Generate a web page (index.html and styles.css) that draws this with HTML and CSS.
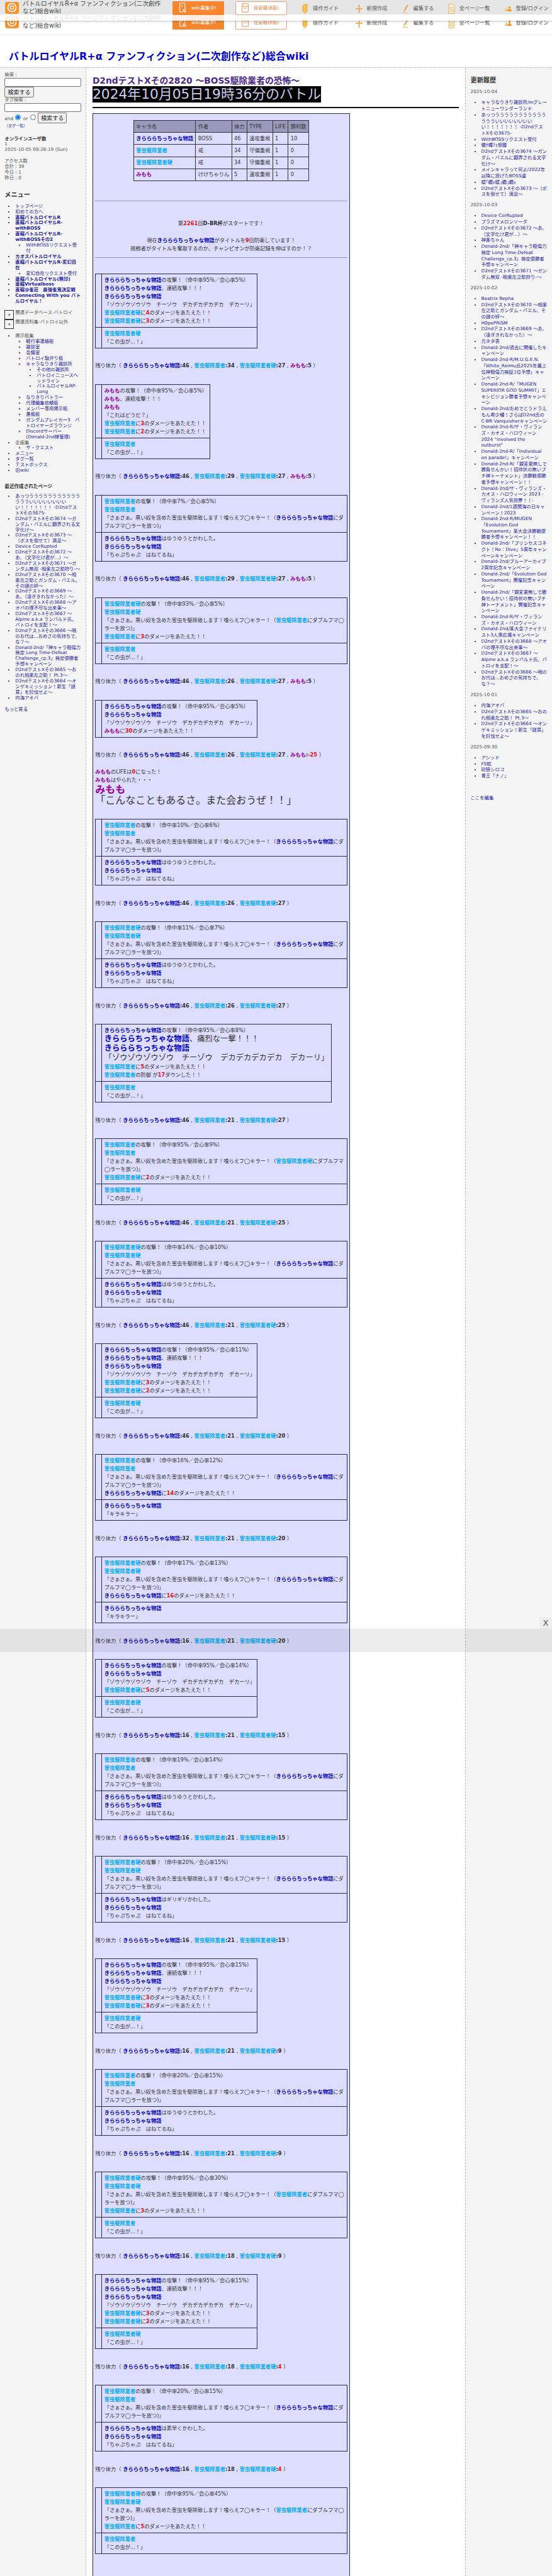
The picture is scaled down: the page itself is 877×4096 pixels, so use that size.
FILE: index.html
```html
<!DOCTYPE html>
<html lang="ja">
<head>
  <meta charset="UTF-8">
  <title>D2ndテストXその2820 ～BOSS駆除業者の恐怖～</title>
  <link rel="stylesheet" href="styles.css">
</head>
<body>
<svg class="defs" width="0" height="0">
  <symbol id="i-logo" viewBox="0 0 22 19"><path d="M3 0h16a3 3 0 0 1 3 3v12a4 4 0 0 1-4 4H4a4 4 0 0 1-4-4V3a3 3 0 0 1 3-3z" fill="#f7922f"/><circle cx="11" cy="9" r="6.5" fill="none" stroke="#fff" stroke-width="1.6"/><circle cx="11" cy="9" r="2.6" fill="none" stroke="#fff" stroke-width="1.4"/></symbol>
  <symbol id="i-doc" viewBox="0 0 16 24"><path d="M1 1h12v15H9v5H1z" fill="none" stroke="#fff" stroke-width="1.6"/><path d="M6 5v5M10 20h6M13 17v6" stroke="#fff" stroke-width="1.6"/></symbol>
  <symbol id="i-box" viewBox="0 0 18 24"><rect x="1" y="1" width="16" height="22" rx="2" fill="none" stroke="#ee8a45" stroke-width="1.6"/><path d="M1 8h16M6 13h6" stroke="#ee8a45" stroke-width="1.6"/></symbol>
  <symbol id="i-guide" viewBox="0 0 12 22"><path d="M1 4l5-3 5 0v13c0 3-3 5-5 7-2-2-5-4-5-7z" fill="#f4c15a" stroke="#ee9a3a" stroke-width="1"/></symbol>
  <symbol id="i-new" viewBox="0 0 16 22"><path d="M8 1v20M0 11h16" stroke="#f0a040" stroke-width="2.4"/></symbol>
  <symbol id="i-edit" viewBox="0 0 16 22"><path d="M12 1L14 3L6 16L3 16z" fill="#ee9a3a"/><path d="M1 20h11" stroke="#f4c15a" stroke-width="2"/></symbol>
  <symbol id="i-list" viewBox="0 0 14 22"><path d="M1 1h8l4 4v16H1z" fill="#fff5dd" stroke="#f0a040" stroke-width="1.2"/><path d="M3.5 9h7M3.5 12.5h7M3.5 16h7" stroke="#f0a040"/></symbol>
  <symbol id="i-user" viewBox="0 0 22 16"><circle cx="15" cy="3.5" r="3.5" fill="#f0952f"/><path d="M8 16c0-5 3-8 7-8s7 3 7 8z" fill="#f0952f"/><circle cx="5" cy="7" r="2.5" fill="#f4c15a"/><path d="M0 16c0-3 2-6 5-6s4 3 4 6z" fill="#f4c15a"/></symbol>
</svg>

<div class="page">
  <header class="topbar">
    <div class="navrow">
      <div class="brand"><svg class="logo"><use href="#i-logo"/></svg><span>バトルロイヤルR+α ファンフィクション(二次創作など)総合wiki</span></div>
      <a class="btn btn-orange"><svg class="btn-ico"><use href="#i-doc"/></svg>wiki募集中!</a>
      <a class="btn btn-line"><svg class="btn-ico"><use href="#i-box"/></svg>目安箱(β版)</a>
      <a class="navitem"><svg class="nav-ico"><use href="#i-guide"/></svg>操作ガイド</a>
      <a class="navitem"><svg class="nav-ico"><use href="#i-new"/></svg>新規作成</a>
      <a class="navitem"><svg class="nav-ico"><use href="#i-edit"/></svg>編集する</a>
      <a class="navitem"><svg class="nav-ico"><use href="#i-list"/></svg>全ページ一覧</a>
      <a class="navitem"><svg class="nav-ico"><use href="#i-user"/></svg>登録/ログイン</a>
    </div>
  </header>

  <!-- sticky copy of the bar, sits over the one above -->
  <div class="sticky">
    <div class="navrow">
      <div class="brand"><svg class="logo"><use href="#i-logo"/></svg><span>バトルロイヤルR+α ファンフィクション(二次創作など)総合wiki</span></div>
      <a class="btn btn-orange"><svg class="btn-ico"><use href="#i-doc"/></svg>wiki募集中!</a>
      <a class="btn btn-line"><svg class="btn-ico"><use href="#i-box"/></svg>目安箱(β版)</a>
      <a class="navitem"><svg class="nav-ico"><use href="#i-guide"/></svg>操作ガイド</a>
      <a class="navitem"><svg class="nav-ico"><use href="#i-new"/></svg>新規作成</a>
      <a class="navitem"><svg class="nav-ico"><use href="#i-edit"/></svg>編集する</a>
      <a class="navitem"><svg class="nav-ico"><use href="#i-list"/></svg>全ページ一覧</a>
      <a class="navitem"><svg class="nav-ico"><use href="#i-user"/></svg>登録/ログイン</a>
    </div>
  </div>

  <h1 class="site-title">バトルロイヤルR+α ファンフィクション(二次創作など)総合wiki</h1>

  <div class="columns">
    <aside class="side side-left">
      <form class="search">
        <label>検索 :</label>
        <input class="field" type="text">
        <button class="go" type="button">検索する</button>
        <label>タグ検索 :</label>
        <input class="field" type="text">
        <div class="andor">and <input class="radio" type="radio" name="op" checked> or <input class="radio" type="radio" name="op"> <button class="go" type="button">検索する</button></div>
        <a class="taglist">（タグ一覧）</a>
      </form>

      <div class="stats">
        <strong>オンラインユーザ数</strong><br>1<br>2025-10-05 08:26:19 (Sun)
      </div>
      <div class="stats">
        アクセス数<br>合計 : 39<br>今日 : 1<br>昨日 : 0
      </div>

      <h2 class="side-h">メニュー</h2>
      <ul class="tree">
        <li><a>トップページ</a></li>
        <li><a>初めての方へ</a></li>
        <li><a><b>直轄バトルロイヤルR</b></a></li>
        <li><a><b>直轄バトルロイヤルR-withBOSS</b></a></li>
        <li><a><b>直轄バトルロイヤルR-withBOSSその2</b></a>
          <ul><li><a>WithBOSSリクエスト受付</a></li></ul></li>
        <li><a><b>カオスバトルロイヤル</b></a></li>
        <li><a><b>直轄バトルロイヤルR-変幻自在</b></a>
          <ul><li><a>変幻自在リクエスト受付</a></li></ul></li>
        <li><a><b>直轄バトルロイヤル(無印)</b></a></li>
        <li><a><b>直轄Virtualboss</b></a></li>
        <li><a><b>直轄@雀荘　最強雀鬼決定戦</b></a></li>
        <li><a><b>Connecting With you バトルロイヤル！</b></a></li>
      </ul>

      <div class="fold fold-first"><span class="plus">+</span>関連データベース-バトロイ</div>
      <div class="fold"><span class="plus">+</span>関連資料集-バトロイ以外</div>

      <ul class="tree tree-board">
        <li>掲示板集
          <ul>
            <li><a>軽行事連絡板</a></li>
            <li><a>雑談室</a></li>
            <li><a>会議室</a></li>
            <li><a>バトロイ駄弁り板</a></li>
            <li><a>キャラなりきり雑談所</a>
              <ul>
                <li><a>その他の雑談所</a></li>
                <li><a>バトロイニュースヘッドライン</a></li>
                <li><a>バトルロイヤルRP-Long</a></li>
              </ul></li>
            <li><a>なりきりバトラー</a></li>
            <li><a>代理編集依頼板</a></li>
            <li><a>メンバー専用掲示板</a></li>
            <li><a>愚痴板</a></li>
            <li><a>ガンダムブレイカー3　バトロイヤーズラウンジ</a></li>
            <li><a>Discordサーバー(Donald-2nd様管理)</a></li>
          </ul></li>
        <li>企画集
          <ul><li><a>ザ・クエスト</a></li></ul></li>
        <li><a>メニュー</a></li>
        <li><a>タグ一覧</a></li>
        <li><a>テストボックス</a></li>
        <li><a>旧wiki</a></li>
      </ul>

      <h3 class="side-h3">最近作成されたページ</h3>
      <ul class="tree">
        <li><a>あっつうううううううううううううういいいいいいいいい！！！！！！！ -D2ndテストXその3675-</a></li>
        <li><a>D2ndテストXその3674 ～ガンダム・バエルに翻弄される文字化け～</a></li>
        <li><a>D2ndテストXその3673 ～（ボスを倒せて）満足～</a></li>
        <li><a>Device CorRupted</a></li>
        <li><a>D2ndテストXその3672 ～あ。（文字化け君が...）～</a></li>
        <li><a>D2ndテストXその3671 ～ガンダム無双 -相楽左之助狩り-～</a></li>
        <li><a>D2ndテストXその3670 ～相楽左之助とガンダム・バエル、その謎の絆～</a></li>
        <li><a>D2ndテストXその3669 ～あ。（凌ぎきれなかった）～</a></li>
        <li><a>D2ndテストXその3668 ～アオバの理不尽な出来事～</a></li>
        <li><a>D2ndテストXその3667 ～Alpine a.k.a ランバルド氏、バトロイを支配！～</a></li>
        <li><a>D2ndテストXその3666 ～唄のお代は...おめさの気持ちで、な？～</a></li>
        <li><a>Donald-2nd/「神キャラ殺傷力検定 Long Time-Defeat Challenge_cp.3」検定優勝者予想キャンペーン</a></li>
        <li><a>D2ndテストXその3665 ～おのれ相楽左之助！ Pt.3～</a></li>
        <li><a>D2ndテストXその3664 ～オンゲキミッション！新生「謎茸」を討伐せよ～</a></li>
        <li><a>内海アオバ</a></li>
      </ul>
      <a class="more">もっと見る</a>
    </aside>

    <main class="content">
      <h2 class="page-title">D2ndテストXその2820 ～BOSS駆除業者の恐怖～</h2>
      <h2 class="battle-title">2024年10月05日19時36分のバトル</h2>
      <hr class="title-rule">

      <div class="battle">
        <table class="roster">
          <tr><th>キャラ名</th><th>作者</th><th>体力</th><th>TYPE</th><th>LIFE</th><th>勝利数</th></tr>
          <tr><td><b class="k">きらららちっちゃな物語</b></td><td>BOSS</td><td>46</td><td>速攻重視</td><td>1</td><td>10</td></tr>
          <tr><td><b class="g">害虫駆除業者</b></td><td>戒</td><td>34</td><td>守備重視</td><td>1</td><td>0</td></tr>
          <tr><td><b class="g">害虫駆除業者硬</b></td><td>戒</td><td>34</td><td>守備重視</td><td>1</td><td>0</td></tr>
          <tr><td><b class="m">みもも</b></td><td>けけちゃりん</td><td>5</td><td>速攻重視</td><td>1</td><td>0</td></tr>
        </table>

        <hr class="battle-rule first">
        <p class="start">第<b class="r">2261</b>回<b>D-BR杯</b>がスタートです！</p>
        <p class="champ">現在<b class="k">きらららちっちゃな物語</b>がタイトルを<b class="r">9</b>回防衛しています！<br>挑戦者がタイトルを奪取するのか、チャンピオンが防衛記録を伸ばすのか！？</p>
        <hr class="battle-rule">

        <table class="log log-first">
          <tr><td class="mark"></td><td><b class="k">きらららちっちゃな物語</b>の攻撃！（命中率95%／会心率5%）<br><b class="k">きらららちっちゃな物語</b>、連続攻撃！！！<br><b class="k">きらららちっちゃな物語</b><br>「ゾウゾウゾウゾウ　チーゾウ　デカデカデカデカ　デカーリ」<br><b class="g">害虫駆除業者硬</b>に<b class="r">4</b>のダメージをあたえた！！<br><b class="g">害虫駆除業者硬</b>に<b class="r">3</b>のダメージをあたえた！！</td></tr>
          <tr><td class="mark"></td><td><b class="g">害虫駆除業者硬</b><br>「この虫が...！」</td></tr>
        </table>
        <p class="hp">残り体力（ <b class="k">きらららちっちゃな物語</b><b>:46</b> , <b class="g">害虫駆除業者</b><b>:34</b> , <b class="g">害虫駆除業者硬</b><b>:27</b> , <b class="m">みもも</b><b>:5</b> ）</p>

        <table class="log">
          <tr><td class="mark"></td><td><b class="m">みもも</b>の攻撃！（命中率95%／会心率5%）<br><b class="m">みもも</b>、連続攻撃！！！<br><b class="m">みもも</b><br>「これはどうだ？」<br><b class="g">害虫駆除業者</b>に<b class="r">3</b>のダメージをあたえた！！<br><b class="g">害虫駆除業者</b>に<b class="r">2</b>のダメージをあたえた！！</td></tr>
          <tr><td class="mark"></td><td><b class="g">害虫駆除業者</b><br>「この虫が...！」</td></tr>
        </table>
        <p class="hp">残り体力（ <b class="k">きらららちっちゃな物語</b><b>:46</b> , <b class="g">害虫駆除業者</b><b>:29</b> , <b class="g">害虫駆除業者硬</b><b>:27</b> , <b class="m">みもも</b><b>:5</b> ）</p>

        <table class="log">
          <tr><td class="mark"></td><td><b class="g">害虫駆除業者</b>の攻撃！（命中率7%／会心率5%）<br><b class="g">害虫駆除業者</b><br>「さぁさぁ。黒い奴を含めた害虫を駆除致します！喰らえフ◯キラー！（<b class="k">きらららちっちゃな物語</b>にダブルフマ◯ラーを放つ)」</td></tr>
          <tr><td class="mark"></td><td><b class="k">きらららちっちゃな物語</b>はゆうゆうとかわした。<br><b class="k">きらららちっちゃな物語</b><br>「ちゃぷちゃぷ　はねてるね」</td></tr>
        </table>
        <p class="hp">残り体力（ <b class="k">きらららちっちゃな物語</b><b>:46</b> , <b class="g">害虫駆除業者</b><b>:29</b> , <b class="g">害虫駆除業者硬</b><b>:27</b> , <b class="m">みもも</b><b>:5</b> ）</p>

        <table class="log">
          <tr><td class="mark"></td><td><b class="g">害虫駆除業者硬</b>の攻撃！（命中率93%／会心率5%）<br><b class="g">害虫駆除業者硬</b><br>「さぁさぁ。黒い奴を含めた害虫を駆除致します！喰らえフ◯キラー！（<b class="g">害虫駆除業者</b>にダブルフマ◯ラーを放つ)」<br><b class="g">害虫駆除業者</b>に<b class="r">3</b>のダメージをあたえた！！</td></tr>
          <tr><td class="mark"></td><td><b class="g">害虫駆除業者</b><br>「この虫が...！」</td></tr>
        </table>
        <p class="hp">残り体力（ <b class="k">きらららちっちゃな物語</b><b>:46</b> , <b class="g">害虫駆除業者</b><b>:26</b> , <b class="g">害虫駆除業者硬</b><b>:27</b> , <b class="m">みもも</b><b>:5</b> ）</p>

        <table class="log">
          <tr><td class="mark"></td><td><b class="k">きらららちっちゃな物語</b>の攻撃！（命中率95%／会心率5%）<br><b class="k">きらららちっちゃな物語</b><br>「ゾウゾウゾウゾウ　チーゾウ　デカデカデカデカ　デカーリ」<br><b class="m">みもも</b>に<b class="r">30</b>のダメージをあたえた！！</td></tr>
        </table>
        <p class="hp hp-before-ko">残り体力（ <b class="k">きらららちっちゃな物語</b><b>:46</b> , <b class="g">害虫駆除業者</b><b>:26</b> , <b class="g">害虫駆除業者硬</b><b>:27</b> , <b class="m">みもも</b><b>:<span class="r">-25</span></b> ）</p>
        <div class="ko">
          <b class="m">みもも</b>のLIFEは<b class="r">0</b>になった！<br>
          <b class="m">みもも</b>はやられた・・・
          <div class="last-words"><b class="m">みもも</b><br>「こんなこともあるさ。また会おうぜ！！」</div>
        </div>

        <table class="log">
          <tr><td class="mark"></td><td><b class="g">害虫駆除業者</b>の攻撃！（命中率10%／会心率6%）<br><b class="g">害虫駆除業者</b><br>「さぁさぁ。黒い奴を含めた害虫を駆除致します！喰らえフ◯キラー！（<b class="k">きらららちっちゃな物語</b>にダブルフマ◯ラーを放つ)」</td></tr>
          <tr><td class="mark"></td><td><b class="k">きらららちっちゃな物語</b>はゆうゆうとかわした。<br><b class="k">きらららちっちゃな物語</b><br>「ちゃぷちゃぷ　はねてるね」</td></tr>
        </table>
        <p class="hp">残り体力（ <b class="k">きらららちっちゃな物語</b><b>:46</b> , <b class="g">害虫駆除業者</b><b>:26</b> , <b class="g">害虫駆除業者硬</b><b>:27</b> ）</p>

        <table class="log">
          <tr><td class="mark"></td><td><b class="g">害虫駆除業者硬</b>の攻撃！（命中率11%／会心率7%）<br><b class="g">害虫駆除業者硬</b><br>「さぁさぁ。黒い奴を含めた害虫を駆除致します！喰らえフ◯キラー！（<b class="k">きらららちっちゃな物語</b>にダブルフマ◯ラーを放つ)」</td></tr>
          <tr><td class="mark"></td><td><b class="k">きらららちっちゃな物語</b>はゆうゆうとかわした。<br><b class="k">きらららちっちゃな物語</b><br>「ちゃぷちゃぷ　はねてるね」</td></tr>
        </table>
        <p class="hp">残り体力（ <b class="k">きらららちっちゃな物語</b><b>:46</b> , <b class="g">害虫駆除業者</b><b>:26</b> , <b class="g">害虫駆除業者硬</b><b>:27</b> ）</p>

        <table class="log">
          <tr><td class="mark"></td><td><b class="k">きらららちっちゃな物語</b>の攻撃！（命中率95%／会心率8%）<div class="crit"><b class="k">きらららちっちゃな物語</b>、痛烈な一撃！！！<br><b class="k">きらららちっちゃな物語</b><br>「ゾウゾウゾウゾウ　チーゾウ　デカデカデカデカ　デカーリ」</div><b class="g">害虫駆除業者</b>に<b class="r">5</b>のダメージをあたえた！！<br><b class="g">害虫駆除業者</b>の防御 が<b class="r">17</b>ダウンした！！</td></tr>
          <tr><td class="mark"></td><td><b class="g">害虫駆除業者</b><br>「この虫が...！」</td></tr>
        </table>
        <p class="hp">残り体力（ <b class="k">きらららちっちゃな物語</b><b>:46</b> , <b class="g">害虫駆除業者</b><b>:21</b> , <b class="g">害虫駆除業者硬</b><b>:27</b> ）</p>

        <table class="log">
          <tr><td class="mark"></td><td><b class="g">害虫駆除業者</b>の攻撃！（命中率95%／会心率9%）<br><b class="g">害虫駆除業者</b><br>「さぁさぁ。黒い奴を含めた害虫を駆除致します！喰らえフ◯キラー！（<b class="g">害虫駆除業者硬</b>にダブルフマ◯ラーを放つ)」<br><b class="g">害虫駆除業者硬</b>に<b class="r">2</b>のダメージをあたえた！！</td></tr>
          <tr><td class="mark"></td><td><b class="g">害虫駆除業者硬</b><br>「この虫が...！」</td></tr>
        </table>
        <p class="hp">残り体力（ <b class="k">きらららちっちゃな物語</b><b>:46</b> , <b class="g">害虫駆除業者</b><b>:21</b> , <b class="g">害虫駆除業者硬</b><b>:25</b> ）</p>

        <table class="log">
          <tr><td class="mark"></td><td><b class="g">害虫駆除業者硬</b>の攻撃！（命中率14%／会心率10%）<br><b class="g">害虫駆除業者硬</b><br>「さぁさぁ。黒い奴を含めた害虫を駆除致します！喰らえフ◯キラー！（<b class="k">きらららちっちゃな物語</b>にダブルフマ◯ラーを放つ)」</td></tr>
          <tr><td class="mark"></td><td><b class="k">きらららちっちゃな物語</b>はゆうゆうとかわした。<br><b class="k">きらららちっちゃな物語</b><br>「ちゃぷちゃぷ　はねてるね」</td></tr>
        </table>
        <p class="hp">残り体力（ <b class="k">きらららちっちゃな物語</b><b>:46</b> , <b class="g">害虫駆除業者</b><b>:21</b> , <b class="g">害虫駆除業者硬</b><b>:25</b> ）</p>

        <table class="log">
          <tr><td class="mark"></td><td><b class="k">きらららちっちゃな物語</b>の攻撃！（命中率95%／会心率11%）<br><b class="k">きらららちっちゃな物語</b>、連続攻撃！！！<br><b class="k">きらららちっちゃな物語</b><br>「ゾウゾウゾウゾウ　チーゾウ　デカデカデカデカ　デカーリ」<br><b class="g">害虫駆除業者硬</b>に<b class="r">3</b>のダメージをあたえた！！<br><b class="g">害虫駆除業者硬</b>に<b class="r">2</b>のダメージをあたえた！！</td></tr>
          <tr><td class="mark"></td><td><b class="g">害虫駆除業者硬</b><br>「この虫が...！」</td></tr>
        </table>
        <p class="hp">残り体力（ <b class="k">きらららちっちゃな物語</b><b>:46</b> , <b class="g">害虫駆除業者</b><b>:21</b> , <b class="g">害虫駆除業者硬</b><b>:20</b> ）</p>

        <table class="log">
          <tr><td class="mark"></td><td><b class="g">害虫駆除業者</b>の攻撃！（命中率16%／会心率12%）<br><b class="g">害虫駆除業者</b><br>「さぁさぁ。黒い奴を含めた害虫を駆除致します！喰らえフ◯キラー！（<b class="k">きらららちっちゃな物語</b>にダブルフマ◯ラーを放つ)」<br><b class="k">きらららちっちゃな物語</b>に<b class="r">14</b>のダメージをあたえた！！</td></tr>
          <tr><td class="mark"></td><td><b class="k">きらららちっちゃな物語</b><br>「キラキラー」</td></tr>
        </table>
        <p class="hp">残り体力（ <b class="k">きらららちっちゃな物語</b><b>:32</b> , <b class="g">害虫駆除業者</b><b>:21</b> , <b class="g">害虫駆除業者硬</b><b>:20</b> ）</p>

        <table class="log">
          <tr><td class="mark"></td><td><b class="g">害虫駆除業者硬</b>の攻撃！（命中率17%／会心率13%）<br><b class="g">害虫駆除業者硬</b><br>「さぁさぁ。黒い奴を含めた害虫を駆除致します！喰らえフ◯キラー！（<b class="k">きらららちっちゃな物語</b>にダブルフマ◯ラーを放つ)」<br><b class="k">きらららちっちゃな物語</b>に<b class="r">16</b>のダメージをあたえた！！</td></tr>
          <tr><td class="mark"></td><td><b class="k">きらららちっちゃな物語</b><br>「キラキラー」</td></tr>
        </table>
        <p class="hp">残り体力（ <b class="k">きらららちっちゃな物語</b><b>:16</b> , <b class="g">害虫駆除業者</b><b>:21</b> , <b class="g">害虫駆除業者硬</b><b>:20</b> ）</p>

        <table class="log">
          <tr><td class="mark"></td><td><b class="k">きらららちっちゃな物語</b>の攻撃！（命中率95%／会心率14%）<br><b class="k">きらららちっちゃな物語</b><br>「ゾウゾウゾウゾウ　チーゾウ　デカデカデカデカ　デカーリ」<br><b class="g">害虫駆除業者硬</b>に<b class="r">5</b>のダメージをあたえた！！</td></tr>
          <tr><td class="mark"></td><td><b class="g">害虫駆除業者硬</b><br>「この虫が...！」</td></tr>
        </table>
        <p class="hp">残り体力（ <b class="k">きらららちっちゃな物語</b><b>:16</b> , <b class="g">害虫駆除業者</b><b>:21</b> , <b class="g">害虫駆除業者硬</b><b>:15</b> ）</p>

        <table class="log">
          <tr><td class="mark"></td><td><b class="g">害虫駆除業者</b>の攻撃！（命中率19%／会心率14%）<br><b class="g">害虫駆除業者</b><br>「さぁさぁ。黒い奴を含めた害虫を駆除致します！喰らえフ◯キラー！（<b class="k">きらららちっちゃな物語</b>にダブルフマ◯ラーを放つ)」</td></tr>
          <tr><td class="mark"></td><td><b class="k">きらららちっちゃな物語</b>はゆうゆうとかわした。<br><b class="k">きらららちっちゃな物語</b><br>「ちゃぷちゃぷ　はねてるね」</td></tr>
        </table>
        <p class="hp">残り体力（ <b class="k">きらららちっちゃな物語</b><b>:16</b> , <b class="g">害虫駆除業者</b><b>:21</b> , <b class="g">害虫駆除業者硬</b><b>:15</b> ）</p>

        <table class="log">
          <tr><td class="mark"></td><td><b class="g">害虫駆除業者硬</b>の攻撃！（命中率20%／会心率15%）<br><b class="g">害虫駆除業者硬</b><br>「さぁさぁ。黒い奴を含めた害虫を駆除致します！喰らえフ◯キラー！（<b class="k">きらららちっちゃな物語</b>にダブルフマ◯ラーを放つ)」</td></tr>
          <tr><td class="mark"></td><td><b class="k">きらららちっちゃな物語</b>はギリギリかわした。<br><b class="k">きらららちっちゃな物語</b><br>「ちゃぷちゃぷ　はねてるね」</td></tr>
        </table>
        <p class="hp">残り体力（ <b class="k">きらららちっちゃな物語</b><b>:16</b> , <b class="g">害虫駆除業者</b><b>:21</b> , <b class="g">害虫駆除業者硬</b><b>:15</b> ）</p>

        <table class="log">
          <tr><td class="mark"></td><td><b class="k">きらららちっちゃな物語</b>の攻撃！（命中率95%／会心率15%）<br><b class="k">きらららちっちゃな物語</b>、連続攻撃！！！<br><b class="k">きらららちっちゃな物語</b><br>「ゾウゾウゾウゾウ　チーゾウ　デカデカデカデカ　デカーリ」<br><b class="g">害虫駆除業者硬</b>に<b class="r">3</b>のダメージをあたえた！！<br><b class="g">害虫駆除業者硬</b>に<b class="r">3</b>のダメージをあたえた！！</td></tr>
          <tr><td class="mark"></td><td><b class="g">害虫駆除業者硬</b><br>「この虫が...！」</td></tr>
        </table>
        <p class="hp">残り体力（ <b class="k">きらららちっちゃな物語</b><b>:16</b> , <b class="g">害虫駆除業者</b><b>:21</b> , <b class="g">害虫駆除業者硬</b><b>:9</b> ）</p>

        <table class="log">
          <tr><td class="mark"></td><td><b class="g">害虫駆除業者</b>の攻撃！（命中率20%／会心率15%）<br><b class="g">害虫駆除業者</b><br>「さぁさぁ。黒い奴を含めた害虫を駆除致します！喰らえフ◯キラー！（<b class="k">きらららちっちゃな物語</b>にダブルフマ◯ラーを放つ)」</td></tr>
          <tr><td class="mark"></td><td><b class="k">きらららちっちゃな物語</b>はゆうゆうとかわした。<br><b class="k">きらららちっちゃな物語</b><br>「ちゃぷちゃぷ　はねてるね」</td></tr>
        </table>
        <p class="hp">残り体力（ <b class="k">きらららちっちゃな物語</b><b>:16</b> , <b class="g">害虫駆除業者</b><b>:21</b> , <b class="g">害虫駆除業者硬</b><b>:9</b> ）</p>

        <table class="log">
          <tr><td class="mark"></td><td><b class="g">害虫駆除業者硬</b>の攻撃！（命中率95%／会心率30%）<br><b class="g">害虫駆除業者硬</b><br>「さぁさぁ。黒い奴を含めた害虫を駆除致します！喰らえフ◯キラー！（<b class="g">害虫駆除業者</b>にダブルフマ◯ラーを放つ)」<br><b class="g">害虫駆除業者</b>に<b class="r">3</b>のダメージをあたえた！！</td></tr>
          <tr><td class="mark"></td><td><b class="g">害虫駆除業者</b><br>「この虫が...！」</td></tr>
        </table>
        <p class="hp">残り体力（ <b class="k">きらららちっちゃな物語</b><b>:16</b> , <b class="g">害虫駆除業者</b><b>:18</b> , <b class="g">害虫駆除業者硬</b><b>:9</b> ）</p>

        <table class="log">
          <tr><td class="mark"></td><td><b class="k">きらららちっちゃな物語</b>の攻撃！（命中率95%／会心率15%）<br><b class="k">きらららちっちゃな物語</b>、連続攻撃！！！<br><b class="k">きらららちっちゃな物語</b><br>「ゾウゾウゾウゾウ　チーゾウ　デカデカデカデカ　デカーリ」<br><b class="g">害虫駆除業者硬</b>に<b class="r">3</b>のダメージをあたえた！！<br><b class="g">害虫駆除業者硬</b>に<b class="r">2</b>のダメージをあたえた！！</td></tr>
          <tr><td class="mark"></td><td><b class="g">害虫駆除業者硬</b><br>「この虫が...！」</td></tr>
        </table>
        <p class="hp">残り体力（ <b class="k">きらららちっちゃな物語</b><b>:16</b> , <b class="g">害虫駆除業者</b><b>:18</b> , <b class="g">害虫駆除業者硬</b><b>:<span class="r">4</span></b> ）</p>

        <table class="log">
          <tr><td class="mark"></td><td><b class="g">害虫駆除業者</b>の攻撃！（命中率20%／会心率15%）<br><b class="g">害虫駆除業者</b><br>「さぁさぁ。黒い奴を含めた害虫を駆除致します！喰らえフ◯キラー！（<b class="k">きらららちっちゃな物語</b>にダブルフマ◯ラーを放つ)」</td></tr>
          <tr><td class="mark"></td><td><b class="k">きらららちっちゃな物語</b>は素早くかわした。<br><b class="k">きらららちっちゃな物語</b><br>「ちゃぷちゃぷ　はねてるね」</td></tr>
        </table>
        <p class="hp">残り体力（ <b class="k">きらららちっちゃな物語</b><b>:16</b> , <b class="g">害虫駆除業者</b><b>:18</b> , <b class="g">害虫駆除業者硬</b><b>:<span class="r">4</span></b> ）</p>

        <table class="log">
          <tr><td class="mark"></td><td><b class="g">害虫駆除業者硬</b>の攻撃！（命中率95%／会心率45%）<br><b class="g">害虫駆除業者硬</b><br>「さぁさぁ。黒い奴を含めた害虫を駆除致します！喰らえフ◯キラー！（<b class="g">害虫駆除業者</b>にダブルフマ◯ラーを放つ)」<br><b class="g">害虫駆除業者</b>に<b class="r">5</b>のダメージをあたえた！！</td></tr>
          <tr><td class="mark"></td><td><b class="g">害虫駆除業者</b><br>「この虫が...！」</td></tr>
        </table>
      </div>
    </main>

    <aside class="side side-right">
      <h2 class="side-h updates-h">更新履歴</h2>
      <div class="date">2025-10-04</div>
      <ul class="tree">
        <li><a>キャラなりきり雑談所/inグレートニューワンダーランド</a></li>
        <li><a>あっつうううううううううううううういいいいいいいいい！！！！！！！ -D2ndテストXその3675-</a></li>
        <li><a>WithBOSSリクエスト受付</a></li>
        <li><a>蝎ｻ蠅?ｫ懷錘</a></li>
        <li><a>D2ndテストXその3674 ～ガンダム・バエルに翻弄される文字化け～</a></li>
        <li><a>メインキャラって何よ/2022年以降に投げたBOSS達</a></li>
        <li><a>繧｢繝ｫ繧ｭ繝｣繝ｫ</a></li>
        <li><a>D2ndテストXその3673 ～（ボスを倒せて）満足～</a></li>
      </ul>
      <div class="date">2025-10-03</div>
      <ul class="tree">
        <li><a>Device CorRupted</a></li>
        <li><a>プラズマメロンソーダ</a></li>
        <li><a>D2ndテストXその3672 ～あ。（文字化け君が...）～</a></li>
        <li><a>神楽ちゃん</a></li>
        <li><a>Donald-2nd/「神キャラ殺傷力検定 Long Time-Defeat Challenge_cp.3」検定優勝者予想キャンペーン</a></li>
        <li><a>D2ndテストXその3671 ～ガンダム無双 -相楽左之助狩り-～</a></li>
      </ul>
      <div class="date">2025-10-02</div>
      <ul class="tree">
        <li><a>Beatrix Repha</a></li>
        <li><a>D2ndテストXその3670 ～相楽左之助とガンダム・バエル、その謎の絆～</a></li>
        <li><a>H0pePRiSM</a></li>
        <li><a>D2ndテストXその3669 ～あ。（凌ぎきれなかった）～</a></li>
        <li><a>元ネタ表</a></li>
        <li><a>Donald-2nd/過去に開催したキャンペーン</a></li>
        <li><a>Donald-2nd-R/M.U.G.E.N.「White_Reimu氏2025年最上位神殺傷力検証1位予想」キャンペーン</a></li>
        <li><a>Donald-2nd-R/「MUGEN SUPERIOR GOD SUMMIT」エキシビジョン勝者予想キャンペーン</a></li>
        <li><a>Donald-2nd/おめでとうドラえもん希少種！さらばD2nd氏のC-BR Vanquisherキャンペーン</a></li>
        <li><a>Donald-2nd-R/ザ・ヴィランズ・カオス・ハロウィーン 2024 "involved the outburst"</a></li>
        <li><a>Donald-2nd-R/「Individual on parade!」キャンペーン</a></li>
        <li><a>Donald-2nd-R/「親変更無しで勝負せんかい！招待状の無いプチ神トーナメント」決勝戦優勝者予想キャンペーン！！</a></li>
        <li><a>Donald-2nd/ザ・ヴィランズ・カオス・ハロウィーン 2023 -ヴィランズ人気投票！！-</a></li>
        <li><a>Donald-2nd/1週間海の日キャンペーン！2023</a></li>
        <li><a>Donald-2nd-R/MUGEN「Evolution God Tournament」某大会決勝戦優勝者予想キャンペーン！！</a></li>
        <li><a>Donald-2nd/「プリンセスコネクト！Re：Dive」5周年キャンペーンキャンペーン</a></li>
        <li><a>Donald-2nd/ブルーアーカイブ2周年記念キャンペーン</a></li>
        <li><a>Donald-2nd/「Evolution God Tournament」開催記念キャンペーン</a></li>
        <li><a>Donald-2nd/「親変更無しで勝負せんかい！招待状の無いプチ神トーナメント」開催記念キャンペーン</a></li>
        <li><a>Donald-2nd-R/ザ・ヴィランズ・カオス・ハロウィーン</a></li>
        <li><a>Donald-2nd/某大会ファイナリスト3人衆応援キャンペーン</a></li>
        <li><a>D2ndテストXその3668 ～アオバの理不尽な出来事～</a></li>
        <li><a>D2ndテストXその3667 ～Alpine a.k.a ランバルド氏、バトロイを支配！～</a></li>
        <li><a>D2ndテストXその3666 ～唄のお代は...おめさの気持ちで、な？～</a></li>
      </ul>
      <div class="date">2025-10-01</div>
      <ul class="tree">
        <li><a>内海アオバ</a></li>
        <li><a>D2ndテストXその3665 ～おのれ相楽左之助！ Pt.3～</a></li>
        <li><a>D2ndテストXその3664 ～オンゲキミッション！新生「謎茸」を討伐せよ～</a></li>
      </ul>
      <div class="date">2025-09-30</div>
      <ul class="tree">
        <li><a>アシッド</a></li>
        <li><a>FS蛟</a></li>
        <li><a>砂狼シロコ</a></li>
        <li><a>青王「ナノ」</a></li>
      </ul>
      <a class="more edit-here">ここを編集</a>
    </aside>
  </div>

  <!-- ad strip that was pinned over the page when captured -->
  <div class="ad-band"></div>
  <div class="ad-close">X</div>
</div>
</body>
</html>
```

FILE: styles.css
```css
html, body {
  margin: 0;
  padding: 0;
  background: #fff;
}
body {
  font-family: "DejaVu Sans", "Noto Sans CJK JP", sans-serif;
  color: #333;
  font-size: 8.25px;
  line-height: 13px;
}
.defs {
  position: absolute;
}
.page {
  position: relative;
  width: 877px;
  height: 4096px;
  overflow: hidden;
}

/* top bar */
.topbar {
  height: 56px;
  padding-top: 23px;
  box-sizing: border-box;
  border-bottom: 1px solid #eee;
  background: #fff;
}
.sticky {
  position: absolute;
  top: 0;
  left: 0;
  width: 100%;
  height: 33px;
  background: linear-gradient(#e6e6e6 23px, rgba(255, 255, 255, 0.85) 23px);
  box-shadow: 0 1px 3px rgba(0, 0, 0, 0.25);
}
.navrow {
  display: grid;
  grid-template-columns: 266px 100px 105px 85.5px 74px 73px 90px 75px;
  align-items: center;
  height: 23px;
  padding-left: 8px;
  color: #555;
  font-size: 8.2px;
  white-space: nowrap;
}
.brand {
  display: flex;
  align-items: center;
  gap: 6px;
  white-space: normal;
  font-size: 9.6px;
  line-height: 12px;
  color: #444;
}
.brand span {
  width: 226px;
}
.logo {
  width: 22px;
  height: 19px;
  flex: none;
}
.btn {
  display: flex;
  align-items: center;
  gap: 8px;
  box-sizing: border-box;
  width: 82px;
  height: 22px;
  padding-left: 11px;
  margin-top: 1px;
  border-radius: 2px;
  font-size: 7.4px;
}
.btn-orange {
  background: #f7862f;
  color: #fff;
}
.btn-line {
  border: 1px solid #eda27a;
  background: #fff;
  color: #ee7a35;
  padding-left: 9px;
}
.btn-ico {
  width: 11px;
  height: 17px;
  flex: none;
}
.navitem {
  display: flex;
  align-items: center;
  gap: 7px;
  margin-top: 3px;
}
.nav-ico {
  width: 11px;
  height: 16px;
  flex: none;
}

/* site title */
.site-title {
  margin: 0;
  padding: 24px 0 7px 14px;
  font-size: 16px;
  line-height: 20px;
  color: #0000cc;
  border-bottom: 1px dotted #aaa;
}

/* columns */
.columns {
  display: grid;
  grid-template-columns: 136.5px 602.5px 138px;
  min-height: 3990px;
}
.side {
  background: #f5f5f5;
  font-size: 7.35px;
  line-height: 8.9px;
  color: #555;
}
.side a {
  color: #1c1ca0;
}
.side-left {
  padding: 7px 0 0 7.3px;
  box-sizing: border-box;
  border-right: 1px dashed #bbb;
}
.side-right {
  padding: 14px 0 0 7.5px;
  box-sizing: border-box;
  border-left: 1px dashed #bbb;
  line-height: 9.74px;
}

/* search form */
.search {
  margin-bottom: 12px;
}
.search label {
  display: block;
}
.field {
  display: block;
  box-sizing: border-box;
  width: 121.5px;
  height: 14px;
  padding: 0;
  border: 1px solid #777;
  border-radius: 2px;
  background: #fff;
}
.go {
  box-sizing: border-box;
  width: 46.5px;
  height: 16.4px;
  margin: 0.5px 0 0;
  padding: 0;
  border: 1px solid #777;
  border-radius: 2px;
  background: #efefef;
  color: #222;
  font-family: inherit;
  font-size: 9px;
}
.andor {
  margin-top: 1px;
}
.radio {
  width: 9px;
  height: 9px;
  margin: 0 1px;
}
.taglist {
  display: block;
  font-size: 6px;
}
.stats {
  margin-bottom: 8.9px;
}
.stats strong {
  color: #333;
}
.side-h {
  margin: 16px 0 8px;
  font-size: 10.2px;
  line-height: 12px;
  color: #333;
}
.updates-h {
  margin: 0;
}
.side-h3 {
  margin: 15.6px 0 7.5px;
  font-size: 7.6px;
  line-height: 9px;
  color: #333;
}
.date {
  margin: 7.3px 0;
}

/* side lists */
.tree {
  margin: 0;
  padding: 0 0 0 17px;
  list-style: square;
}
.tree ul {
  margin: 0;
  padding-left: 17px;
  list-style: circle;
}
.tree ul ul {
  list-style: square;
}
.side-left .tree {
  width: 104px;
}
.side-right .tree {
  width: 105px;
}
.fold {
  display: flex;
  gap: 2.7px;
  height: 15.3px;
}
.fold-first {
  margin-top: 8.7px;
}
.plus {
  box-sizing: border-box;
  width: 14.4px;
  height: 15.3px;
  border: 1px solid #333;
  color: #333;
  text-align: center;
  line-height: 14px;
}
.side-left .tree-board {
  margin-top: 7px;
}
.more {
  display: block;
  margin-top: 9px;
}
.edit-here {
  margin-top: 25px;
}

/* main column */
.content {
  padding: 11.5px 10.4px 0;
}
.page-title {
  margin: 0 0 1px;
  font-size: 13.8px;
  line-height: 16px;
  color: #4b2a8a;
}
.battle-title {
  display: inline-block;
  margin: 0;
  background: #000;
  color: #ccccee;
  font-size: 21.8px;
  font-weight: normal;
  line-height: 26px;
  vertical-align: top;
}
.title-rule {
  margin: 7px 0 8px;
  border: 0;
  border-top: 2px solid #111;
}
.battle {
  box-sizing: border-box;
  width: 409px;
  padding: 10.5px 3.4px 3000px;
  border: 1px solid #333;
  background: #ddddff;
}

/* roster */
.roster {
  margin: 0 auto;
  border-collapse: collapse;
}
.roster th, .roster td {
  padding: 2.6px 3.4px;
  border: 1px solid #333;
  text-align: left;
  font-weight: normal;
  white-space: nowrap;
}
.roster th {
  background: #9999bb;
}
.battle-rule {
  margin: 0;
  border: 0;
  border-top: 1px solid #9999bb;
}
.battle-rule.first {
  margin-top: 31px;
}
.start {
  margin: 29px 0 13.6px;
  text-align: center;
}
.champ {
  margin: 0 0 6px;
  text-align: center;
  line-height: 13.6px;
}

/* fight log */
.log {
  border-collapse: collapse;
  max-width: 100%;
}
.log td {
  padding: 3px 3.4px;
  border: 1px solid #2b2b55;
}
.log .mark {
  width: 9px;
  min-width: 9px;
  padding: 0;
}
.log-first {
  margin-top: 25px;
}
.crit {
  font-size: 12.3px;
  line-height: 15px;
}
.hp {
  margin: 21.5px 0 22.5px;
}
.hp-before-ko {
  margin-bottom: 13.6px;
}
.ko {
  margin-bottom: 21.5px;
}
.last-words {
  font-size: 16px;
  line-height: 17px;
}
.k {
  color: #0000c0;
}
.g {
  color: #00aaff;
}
.m {
  color: #990099;
}
.r {
  color: #ee1111;
  font-weight: bold;
}

/* pinned strip */
.ad-band {
  position: absolute;
  left: 0;
  top: 2589.6px;
  width: 100%;
  height: 37.5px;
  background: rgba(0, 0, 0, 0.07);
}
.ad-close {
  position: absolute;
  right: 0;
  top: 2570.6px;
  width: 20px;
  height: 19px;
  background: #eee;
  border-radius: 4px 0 0 0;
  color: #555;
  font-size: 13px;
  line-height: 19px;
  text-align: center;
}
```
